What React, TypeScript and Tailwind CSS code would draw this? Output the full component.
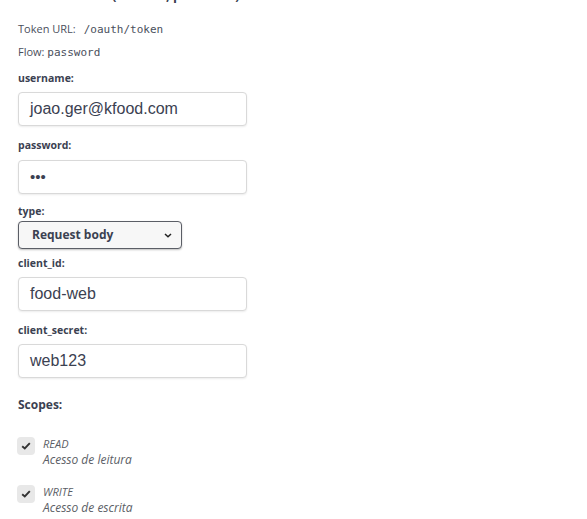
import React from 'react';

const SCOPES = [
  { name: 'READ', desc: 'Acesso de leitura' },
  { name: 'WRITE', desc: 'Acesso de escrita' },
];

const Label: React.FC<{ text: string; className?: string }> = ({ text, className = '' }) => (
  <label className={`block text-[10.5px] leading-[14px] font-bold text-[#3b4151] ${className}`}>{text}</label>
);

const Field: React.FC<{ value: string; className?: string }> = ({ value, className = '' }) => (
  <div
    className={`w-[229px] h-[34px] flex items-center px-[11px] bg-white border border-[#d9d9d9] rounded-[4px] shadow-[0_1px_2px_rgba(0,0,0,0.08)] text-[#3b4151] font-['Liberation_Sans',Arial,sans-serif] ${className}`}
  >
    {value}
  </div>
);

export default function App() {
  return (
    <div className="w-[587px] h-[519px] bg-white overflow-hidden font-['Open_Sans',sans-serif] text-[#3b4151]">
      <div className="pl-[18px]">
        {/* Cut-off heading from the section above */}
        <h4 className="-mt-[12px] h-[14px] text-[13px] leading-[14px] font-bold text-[#3b4151] pl-[52px]">
          oauth (OAuth2, password)
        </h4>

        <p className="mt-[20px] text-[11px] leading-[14px] text-[#4a4f5c]">
          Token URL:
          <code className="ml-[8px] font-['DejaVu_Sans_Mono',monospace] text-[11px]">/oauth/token</code>
        </p>
        <p className="mt-[8px] text-[11px] leading-[14px] text-[#4a4f5c]">
          Flow: <code className="font-['DejaVu_Sans_Mono',monospace] text-[11px]">password</code>
        </p>

        <Label text="username:" className="mt-[11px]" />
        <Field value="joao.ger@kfood.com" className="mt-[7px] text-[16px]" />

        <Label text="password:" className="mt-[12px]" />
        <Field value="•••" className="mt-[8px] text-[15px]" />

        <Label text="type:" className="mt-[10px]" />
        <div className="mt-[3px] w-[164px] h-[28px] flex items-center justify-between pl-[13px] pr-[9px] bg-[#f7f7f7] border-[1.5px] border-[#5b5e66] rounded-[4px] shadow-[0_1px_2px_rgba(0,0,0,0.25)]">
          <span className="text-[12px] font-bold text-[#3b4151]">Request body</span>
          <svg width="8" height="5" viewBox="0 0 8 5" fill="none">
            <path d="M1 1l3 2.8L7 1" stroke="#222" strokeWidth="1.5" />
          </svg>
        </div>

        <Label text="client_id:" className="mt-[7px]" />
        <Field value="food-web" className="mt-[7px] text-[16px]" />

        <Label text="client_secret:" className="mt-[12px]" />
        <Field value="web123" className="mt-[7px] text-[16px]" />

        <h4 className="mt-[19px] text-[12px] leading-[16px] font-bold text-[#3b4151]">Scopes:</h4>

        <div className="mt-[24px] -ml-[1px] flex flex-col gap-[17px]">
          {SCOPES.map((s) => (
            <div key={s.name} className="flex items-start gap-[8px]">
              <div className="w-[18px] h-[18px] rounded-[4px] bg-[#e8e8e8] flex items-center justify-center">
                <svg width="10" height="8" viewBox="0 0 10 8" fill="none">
                  <path d="M1.2 4.2l2.6 2.3L8.8 1.2" stroke="#333" strokeWidth="1.9" />
                </svg>
              </div>
              <div className="italic text-[#5b5e66]">
                <div className="text-[11px] leading-[14px]">{s.name}</div>
                <div className="text-[12px] leading-[17px]">{s.desc}</div>
              </div>
            </div>
          ))}
        </div>
      </div>
    </div>
  );
}
